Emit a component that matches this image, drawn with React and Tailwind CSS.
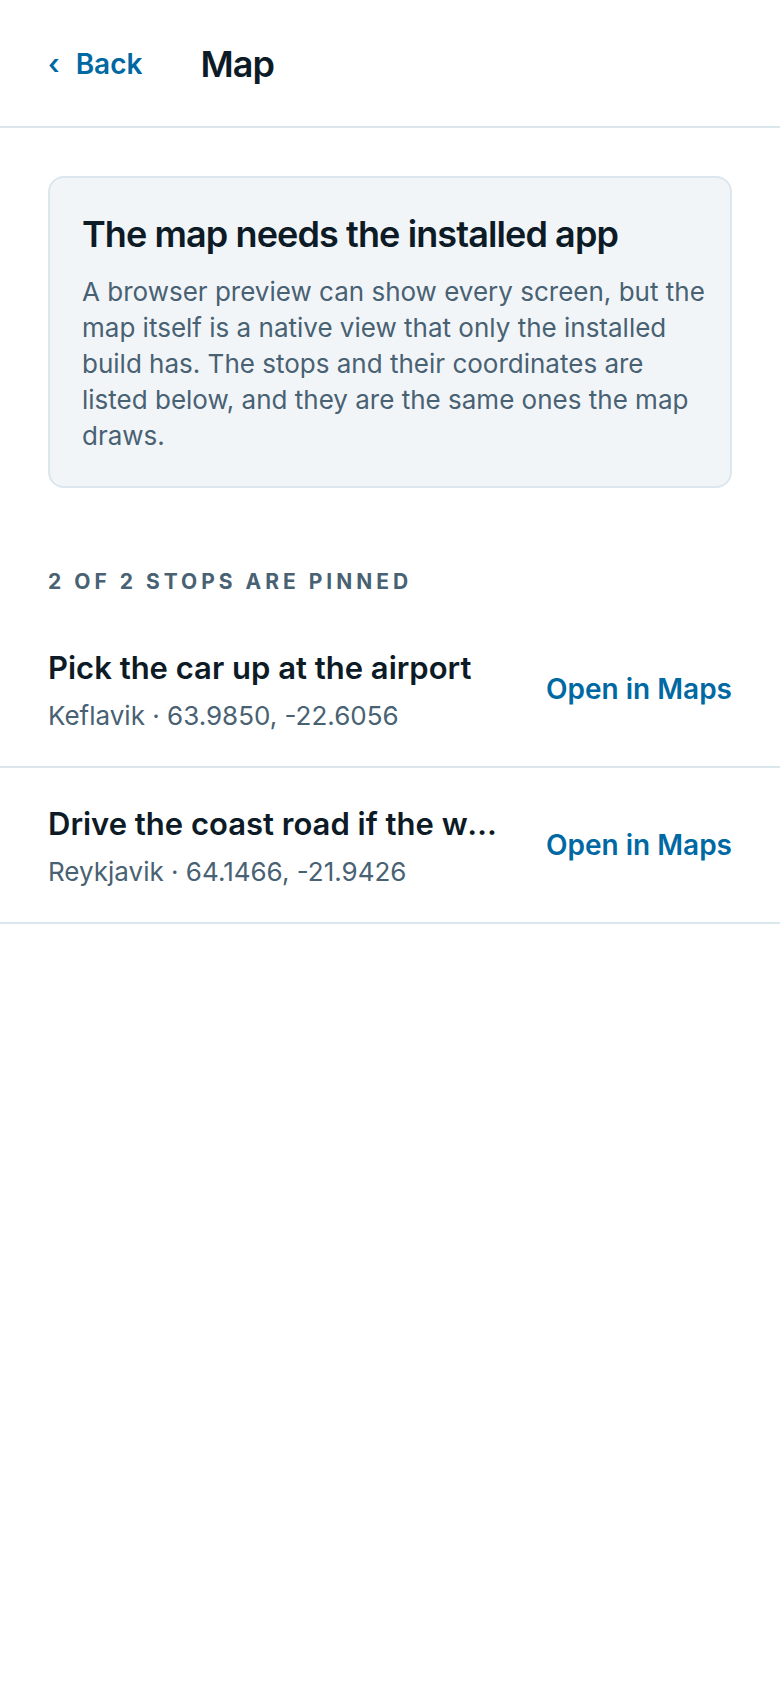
const STOPS = [
  {
    title: 'Pick the car up at the airport',
    city: 'Keflavik',
    lat: '63.9850',
    lng: '-22.6056',
  },
  {
    title: 'Drive the coast road if the weather holds',
    city: 'Reykjavik',
    lat: '64.1466',
    lng: '-21.9426',
  },
]

function mapsUrl(stop) {
  return `https://maps.google.com/?q=${stop.lat},${stop.lng}`
}

export default function App() {
  return (
    <div className="min-h-screen bg-white font-['Inter',sans-serif] text-[#0c1b26]">
      <header className="flex items-center gap-[58px] border-b-2 border-[#dce6ed] px-12 pt-10 pb-[38px]">
        <button type="button" className="flex items-center gap-4 text-[28px] leading-[48px] font-semibold text-[#0069a3]">
          <span aria-hidden="true">‹</span>
          Back
        </button>
        <h1 className="text-[36px] leading-[48px] font-semibold tracking-tight">Map</h1>
      </header>

      <main>
        {/* Notice */}
        <section className="mx-12 mt-12 rounded-2xl border-2 border-[#dce6ed] bg-[#f2f5f8] py-8 pr-6 pl-8">
          <h2 className="text-[36px] leading-[48px] font-semibold tracking-tight">The map needs the installed app</h2>
          <p className="mt-4 text-[26px] leading-9 text-[#486173]">
            A browser preview can show every screen, but the map itself is a native view that only the installed build
            has. The stops and their coordinates are listed below, and they are the same ones the map draws.
          </p>
        </section>

        {/* Pinned stops */}
        <h3 className="px-12 pt-20 pb-4 text-[21px] leading-7 font-bold tracking-[4px] text-[#486173] uppercase">
          2 of 2 stops are pinned
        </h3>
        <ul>
          {STOPS.map((stop) => (
            <li key={stop.title} className="flex items-center gap-10 border-b-2 border-[#dce6ed] px-12 py-8">
              <div className="min-w-0 flex-1">
                <p className="truncate text-[31px] leading-[48px] font-semibold">{stop.title}</p>
                <p className="mt-1.5 text-[26px] leading-9 text-[#486173]">
                  {stop.city} · {stop.lat}, {stop.lng}
                </p>
              </div>
              <a href={mapsUrl(stop)} className="shrink-0 text-[28px] leading-10 font-semibold text-[#0069a3]">
                Open in Maps
              </a>
            </li>
          ))}
        </ul>
      </main>
    </div>
  )
}
